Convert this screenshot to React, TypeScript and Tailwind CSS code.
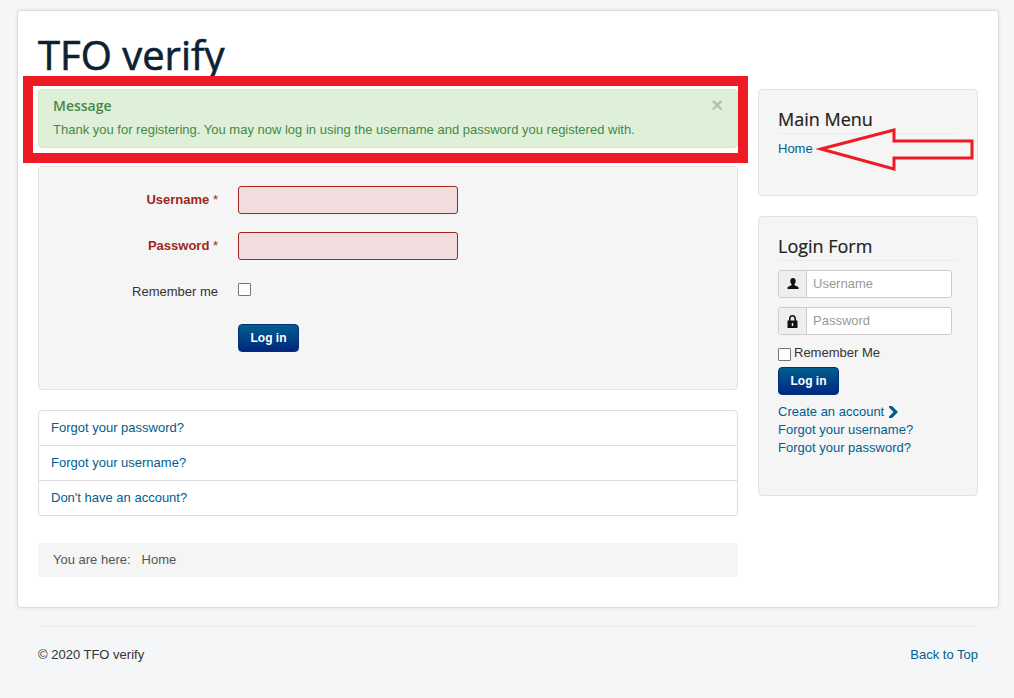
import React from 'react';

const sans = "[font-family:'Liberation_Sans',Arial,sans-serif]";
const linkColor = 'text-[#005e8d]';

const LogInButton = () => (
  <button className="h-7 w-[61px] rounded-[4px] border border-[#00307a] bg-gradient-to-b from-[#005e8d] to-[#002580] text-[12px] font-bold text-white">
    Log in
  </button>
);

const UserIcon = () => (
  <svg width="12" height="12" viewBox="0 0 12 12" fill="#111">
    <path d="M6 0C4.400 0 3.300 1.200 3.300 3c0 1.200.5 2.300 1.200 3v1.200C3 7.900 1 8.400.5 9.500V11h11V9.500C11 8.400 9 7.900 7.500 7.200V6c.7-.7 1.200-1.800 1.200-3C8.700 1.200 7.600 0 6 0z" />
  </svg>
);

const LockIcon = () => (
  <svg width="11" height="13" viewBox="0 0 11 13" fill="#111">
    <path d="M5.500 0C3.400 0 2 1.500 2 3.600V5.500H.5V13h10V5.500H9V3.600C9 1.500 7.600 0 5.500 0zM3.600 5.500V3.600c0-1.200.8-2 1.900-2s1.900.8 1.900 2v1.900zM4.800 8h1.400v3H4.800z" fillRule="evenodd" />
  </svg>
);

const Chevron = () => (
  <svg width="10" height="12" viewBox="0 0 10 12" fill="#005e8d" className="ml-[5px] inline-block">
    <path d="M3 0l6 6-6 6-3-0 0-1.500L4.500 6 0 1.500V0z" />
  </svg>
);

const ErrorField = ({ label, className }: { label: string; className?: string }) => (
  <div className={`flex ${className ?? ''}`}>
    <label className="w-[160px] pt-[5px] text-right text-[13px] leading-[18px] text-[#9d261d]">
      <span className="font-bold">{label}</span> *
    </label>
    <input className="ml-5 h-7 w-[220px] rounded-[3px] border border-[#9d261d] bg-[#f2dede]" />
  </div>
);

const SideInput = ({ icon, placeholder }: { icon: React.ReactNode; placeholder: string }) => (
  <div className="flex h-7 w-[174px] rounded-[3px] border border-[#ccc] bg-white">
    <span className="flex w-[28px] shrink-0 items-center justify-center rounded-l-[3px] border-r border-[#ccc] bg-[#eee]">{icon}</span>
    <input
      placeholder={placeholder}
      className="min-w-0 flex-1 rounded-r-[3px] bg-white px-[6px] text-[13px] placeholder:text-[#999] outline-none"
    />
  </div>
);

const SideTitle = ({ children }: { children: React.ReactNode }) => (
  <h3 className="h-[27px] border-b border-[#ececec] text-[18px] leading-[24px] font-medium text-[#222] [-webkit-text-stroke:0.2px_#222] [font-family:'Open_Sans',sans-serif]">
    {children}
  </h3>
);

export default function App() {
  return (
    <div className={`relative min-h-[698px] overflow-hidden bg-[#f4f6f7] pl-[17px] pr-[15px] pt-[10px] text-[13px] leading-[18px] text-[#333] ${sans}`}>
      <div className="h-[598px] rounded-[4px] border border-[#dcdcdc] bg-white px-5 pt-5 shadow-[0_0_4px_rgba(0,0,0,0.08)]">
        <h1 className="h-[58px] text-[40px] leading-[48px] font-medium text-[#0c2233] [-webkit-text-stroke:0.6px_#0c2233] [font-family:'Open_Sans',sans-serif]">TFO verify</h1>

        <div className="flex gap-5">
          <main className="w-[700px]">
            <div className="relative h-[59px] rounded-[4px] border border-[#d6e9c6] bg-[#dff0d8] px-[14px] pt-[6px] text-[#468847]">
              <span className="absolute right-[14px] top-[5px] text-[20px] font-bold leading-[20px] text-black opacity-20">×</span>
              <h4 className="text-[14px] leading-[20px] font-semibold [font-family:'Open_Sans',sans-serif]">Message</h4>
              <p className="mt-[5px]">Thank you for registering. You may now log in using the username and password you registered with.</p>
            </div>

            <form className="mt-[18px] h-[224px] rounded-[4px] border border-[#e3e3e3] bg-[#f5f5f5] px-[19px] pt-[19px]">
              <ErrorField label="Username" />
              <ErrorField label="Password" className="mt-[18px]" />
              <div className="mt-[18px] flex h-7">
                <label className="w-[160px] pt-[5px] text-right">Remember me</label>
                <div className="ml-5 pt-[5px]">
                  <span className="block size-[13px] rounded-[1px] border border-[#767676] bg-white" />
                </div>
              </div>
              <div className="ml-[180px] mt-[18px]">
                <LogInButton />
              </div>
            </form>

            <ul className={`mt-5 rounded-[4px] border border-[#ddd] ${linkColor}`}>
              <li className="flex h-[35px] items-center border-b border-[#ddd] px-3">Forgot your password?</li>
              <li className="flex h-[35px] items-center border-b border-[#ddd] px-3">Forgot your username?</li>
              <li className="flex h-[34px] items-center px-3">Don't have an account?</li>
            </ul>

            <div className="mt-[27px] flex h-[34px] items-center rounded-[4px] bg-[#f5f5f5] px-[15px] text-[#555]">
              <span>You are here:</span>
              <span className="ml-[11px]">Home</span>
            </div>
          </main>

          <aside className="w-[220px]">
            <div className="h-[107px] rounded-[4px] border border-[#e3e3e3] bg-[#f5f5f5] px-[19px] pt-[17px]">
              <SideTitle>Main Menu</SideTitle>
              <a className={`mt-[6px] block ${linkColor}`}>Home</a>
            </div>

            <div className="mt-5 h-[280px] rounded-[4px] border border-[#e3e3e3] bg-[#f5f5f5] px-[19px] pt-[17px]">
              <SideTitle>Login Form</SideTitle>
              <div className="mt-[9px]">
                <SideInput icon={<UserIcon />} placeholder="Username" />
              </div>
              <div className="mt-[9px]">
                <SideInput icon={<LockIcon />} placeholder="Password" />
              </div>
              <div className="mt-2 flex h-[24px]">
                <span className="mt-[5px] size-[13px] rounded-[1px] border border-[#767676] bg-white" />
                <span className="ml-[3px] pt-[1px]">Remember Me</span>
              </div>
              <LogInButton />
              <div className={`mt-2 ${linkColor}`}>
                <div className="flex items-center">
                  Create an account <Chevron />
                </div>
                <div>Forgot your username?</div>
                <div>Forgot your password?</div>
              </div>
            </div>
          </aside>
        </div>
      </div>

      <footer className="mx-[21px] mt-[18px] flex justify-between border-t border-[#e8eaec] pt-[19px]">
        <span>© 2020 TFO verify</span>
        <a className={linkColor}>Back to Top</a>
      </footer>

      {/* red annotations sitting on top of the screenshot */}
      <div className="pointer-events-none absolute left-[23px] top-[76px] h-[87px] w-[725px] border-[10px] border-[#ed1c24]" />
      <svg className="pointer-events-none absolute left-[810px] top-[120px]" width="170" height="60" viewBox="0 0 170 60">
        <path d="M11 29 L84 10 L84 21 L162 21 L162 38 L84 38 L84 49 Z" fill="none" stroke="#ed1c24" strokeWidth="3" />
      </svg>
    </div>
  );
}
